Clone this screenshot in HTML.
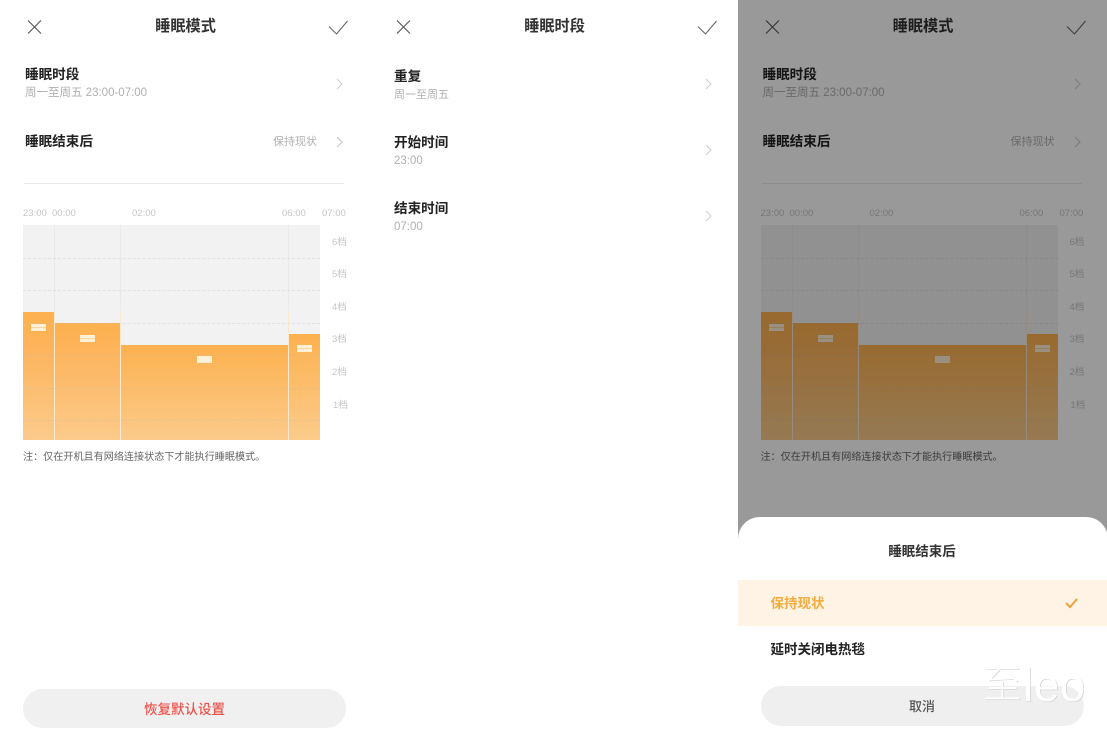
<!DOCTYPE html>
<html lang="zh">
<head>
<meta charset="utf-8">
<title>睡眠模式</title>
<style>
html,body{margin:0;padding:0;background:#fff}
body{width:1107px;height:732px;position:relative;overflow:hidden;font-family:"Liberation Sans","Noto Sans CJK SC",sans-serif;color:#222}
.p{position:absolute;top:0;height:732px;width:369px;overflow:hidden;background:#fff;filter:blur(.3px)}
.t{position:absolute;white-space:nowrap;line-height:1}
.title{top:19px;left:0;width:369px;text-align:center;font-size:15.2px;font-weight:700;color:#333;padding-left:1px}
.h{font-size:13.6px;font-weight:700;color:#222}
.s{font-size:11px;color:#b0b0b0}
.m{font-size:9.5px;color:#c6c6c6}
svg{position:absolute;left:0;top:0}
.g{position:absolute;left:23px;width:297px;height:0;border-top:1px dashed rgba(190,190,190,.3)}
.v{position:absolute;width:1px;top:225px;height:215px;background:linear-gradient(#e9e9e9 40%,#fbe9d0 40%)}
.k{position:absolute;width:15px;height:7px;background:linear-gradient(#fff0d8 0 3px,#fdd59f 3px 4px,#fff0d8 4px)}
</style>
</head>
<body>

<!-- Panel 1 -->
<div class="p" style="left:0">
  <svg width="369" height="240" fill="none">
    <path d="M28 20.5 L41 33.5 M41 20.5 L28 33.5" stroke="#555" stroke-width="1.1"/>
    <path d="M329 26.5 L336.5 34 L347.5 21" stroke="#666" stroke-width="1.1"/>
    <path d="M337 79 L342 84 L337 89" stroke="#d0d0d0" stroke-width="1.1"/>
    <path d="M337 137 L342 142 L337 147" stroke="#c8c8c8" stroke-width="1.1"/>
  </svg>
  <div class="t title">睡眠模式</div>
  <div class="t h" style="left:25px;top:68px">睡眠时段</div>
  <div class="t s" style="left:25px;top:88px;font-size:11.5px">周一至周五 23:00-07:00</div>
  <div class="t h" style="left:25px;top:135px">睡眠结束后</div>
  <div class="t s" style="left:273px;top:137px">保持现状</div>
  <div style="position:absolute;left:24px;top:183px;width:320px;height:1px;background:#eaeaea"></div>

  <div class="t m" style="left:23px;top:209px">23:00</div>
  <div class="t m" style="left:52px;top:209px">00:00</div>
  <div class="t m" style="left:132px;top:209px">02:00</div>
  <div class="t m" style="left:282px;top:209px">06:00</div>
  <div class="t m" style="left:322px;top:209px">07:00</div>

  <div style="position:absolute;left:23px;top:225px;width:297px;height:215px;background:#f2f2f2"></div>
  <div class="v" style="left:54px"></div>
  <div class="v" style="left:120px"></div>
  <div class="v" style="left:288px"></div>
  <div style="position:absolute;left:23px;top:312px;width:31px;height:128px;background:linear-gradient(#fdb14f 0,#fdb35a 25%,#fbcb8b 100%)"></div>
  <div style="position:absolute;left:55px;top:322.5px;width:65px;height:117.5px;background:linear-gradient(#fdb14f 0,#fdb35a 20%,#fbcb8b 100%)"></div>
  <div style="position:absolute;left:121px;top:344.5px;width:167px;height:95.5px;background:linear-gradient(#fdb14f 0,#fbcb8b 100%)"></div>
  <div style="position:absolute;left:289px;top:333.5px;width:31px;height:106.5px;background:linear-gradient(#fdb14f 0,#fbcb8b 100%)"></div>
  <div class="g" style="top:258px"></div>
  <div class="g" style="top:290px"></div>
  <div class="g" style="top:323px"></div>
  <div class="g" style="top:355px"></div>
  <div class="g" style="top:388px"></div>
  <div class="g" style="top:420px"></div>
  <div class="k" style="left:31px;top:323.5px"></div>
  <div class="k" style="left:80px;top:334.5px"></div>
  <div class="k" style="left:197px;top:356px;background:#fff0d8"></div>
  <div class="k" style="left:297px;top:345px"></div>
  <div class="t m" style="left:332px;top:238px">6档</div>
  <div class="t m" style="left:332px;top:270px">5档</div>
  <div class="t m" style="left:332px;top:303px">4档</div>
  <div class="t m" style="left:332px;top:335px">3档</div>
  <div class="t m" style="left:332px;top:368px">2档</div>
  <div class="t m" style="left:333px;top:401px">1档</div>
  <div class="t" style="left:23px;top:453px;font-size:10.1px;color:#666">注：仅在开机且有网络连接状态下才能执行睡眠模式。</div>

  <div style="position:absolute;left:23px;top:689px;width:323px;height:39px;border-radius:20px;background:#f0f0f0"></div>
  <div class="t" style="left:0;width:369px;text-align:center;top:703px;font-size:13.5px;font-weight:500;color:#f0524a">恢复默认设置</div>
</div>

<!-- Panel 2 -->
<div class="p" style="left:369px">
  <svg width="369" height="240" fill="none">
    <path d="M28 20.5 L41 33.5 M41 20.5 L28 33.5" stroke="#555" stroke-width="1.1"/>
    <path d="M329 26.5 L336.5 34 L347.5 21" stroke="#666" stroke-width="1.1"/>
    <path d="M337 79 L342 84 L337 89" stroke="#d0d0d0" stroke-width="1.1"/>
    <path d="M337 145 L342 150 L337 155" stroke="#d0d0d0" stroke-width="1.1"/>
    <path d="M337 211 L342 216 L337 221" stroke="#d0d0d0" stroke-width="1.1"/>
  </svg>
  <div class="t title">睡眠时段</div>
  <div class="t h" style="left:25px;top:70px">重复</div>
  <div class="t s" style="left:25px;top:90px">周一至周五</div>
  <div class="t h" style="left:25px;top:136px">开始时间</div>
  <div class="t s" style="left:25px;top:156px;font-size:11.5px">23:00</div>
  <div class="t h" style="left:25px;top:202px">结束时间</div>
  <div class="t s" style="left:25px;top:222px;font-size:11.5px">07:00</div>
</div>

<!-- Panel 3 -->
<div class="p" style="left:737.5px;width:369.5px">
  <svg width="369" height="240" fill="none">
    <path d="M28 20.5 L41 33.5 M41 20.5 L28 33.5" stroke="#555" stroke-width="1.1"/>
    <path d="M329 26.5 L336.5 34 L347.5 21" stroke="#666" stroke-width="1.1"/>
    <path d="M337 79 L342 84 L337 89" stroke="#d0d0d0" stroke-width="1.1"/>
    <path d="M337 137 L342 142 L337 147" stroke="#c8c8c8" stroke-width="1.1"/>
  </svg>
  <div class="t title">睡眠模式</div>
  <div class="t h" style="left:25px;top:68px">睡眠时段</div>
  <div class="t s" style="left:25px;top:88px;font-size:11.5px">周一至周五 23:00-07:00</div>
  <div class="t h" style="left:25px;top:135px">睡眠结束后</div>
  <div class="t s" style="left:273px;top:137px">保持现状</div>
  <div style="position:absolute;left:24px;top:183px;width:320px;height:1px;background:#eaeaea"></div>

  <div class="t m" style="left:23px;top:209px">23:00</div>
  <div class="t m" style="left:52px;top:209px">00:00</div>
  <div class="t m" style="left:132px;top:209px">02:00</div>
  <div class="t m" style="left:282px;top:209px">06:00</div>
  <div class="t m" style="left:322px;top:209px">07:00</div>

  <div style="position:absolute;left:23px;top:225px;width:297px;height:215px;background:#f2f2f2"></div>
  <div class="v" style="left:54px"></div>
  <div class="v" style="left:120px"></div>
  <div class="v" style="left:288px"></div>
  <div style="position:absolute;left:23px;top:312px;width:31px;height:128px;background:linear-gradient(#fdb14f 0,#fdb35a 25%,#fbcb8b 100%)"></div>
  <div style="position:absolute;left:55px;top:322.5px;width:65px;height:117.5px;background:linear-gradient(#fdb14f 0,#fdb35a 20%,#fbcb8b 100%)"></div>
  <div style="position:absolute;left:121px;top:344.5px;width:167px;height:95.5px;background:linear-gradient(#fdb14f 0,#fbcb8b 100%)"></div>
  <div style="position:absolute;left:289px;top:333.5px;width:31px;height:106.5px;background:linear-gradient(#fdb14f 0,#fbcb8b 100%)"></div>
  <div class="g" style="top:258px"></div>
  <div class="g" style="top:290px"></div>
  <div class="g" style="top:323px"></div>
  <div class="g" style="top:355px"></div>
  <div class="g" style="top:388px"></div>
  <div class="g" style="top:420px"></div>
  <div class="k" style="left:31px;top:323.5px"></div>
  <div class="k" style="left:80px;top:334.5px"></div>
  <div class="k" style="left:197px;top:356px;background:#fff0d8"></div>
  <div class="k" style="left:297px;top:345px"></div>
  <div class="t m" style="left:332px;top:238px">6档</div>
  <div class="t m" style="left:332px;top:270px">5档</div>
  <div class="t m" style="left:332px;top:303px">4档</div>
  <div class="t m" style="left:332px;top:335px">3档</div>
  <div class="t m" style="left:332px;top:368px">2档</div>
  <div class="t m" style="left:333px;top:401px">1档</div>
  <div class="t" style="left:23px;top:453px;font-size:10.1px;color:#666">注：仅在开机且有网络连接状态下才能执行睡眠模式。</div>

  <div style="position:absolute;left:0;top:0;width:370px;height:732px;background:rgba(0,0,0,.4)"></div>

  <div style="position:absolute;left:0;top:517px;width:370px;height:215px;background:#fff;border-radius:22px 22px 0 0"></div>
  <div class="t" style="left:0;width:369px;text-align:center;top:545px;font-size:13.5px;font-weight:700;color:#333">睡眠结束后</div>
  <div style="position:absolute;left:0;top:580px;width:370px;height:46px;background:#fff3e5"></div>
  <div class="t" style="left:33px;top:597px;font-size:13.5px;font-weight:700;color:#f5ac3f">保持现状</div>
  <svg width="369" height="732" fill="none" style="top:0">
    <path d="M328 603 L332 607 L339 599" stroke="#eda33c" stroke-width="2"/>
  </svg>
  <div class="t" style="left:33px;top:643px;font-size:13.5px;font-weight:700;color:#222">延时关闭电热毯</div>
  <div style="position:absolute;left:23px;top:686px;width:323px;height:40px;border-radius:20px;background:#efefef"></div>
  <div class="t" style="left:0;width:369px;text-align:center;top:700px;font-size:13px;font-weight:500;color:#555">取消</div>
</div>

<!-- Watermark -->
<div class="t" style="left:983px;top:666px;font-size:39px;font-weight:300;color:#fff;text-shadow:.6px .6px 0 #c8c8c8">至</div>
<div class="t" style="left:1023px;top:662px;font-size:46px;color:#fff;letter-spacing:.5px;text-shadow:.6px .6px 0 #c8c8c8;font-weight:400">leo</div>

</body>
</html>
